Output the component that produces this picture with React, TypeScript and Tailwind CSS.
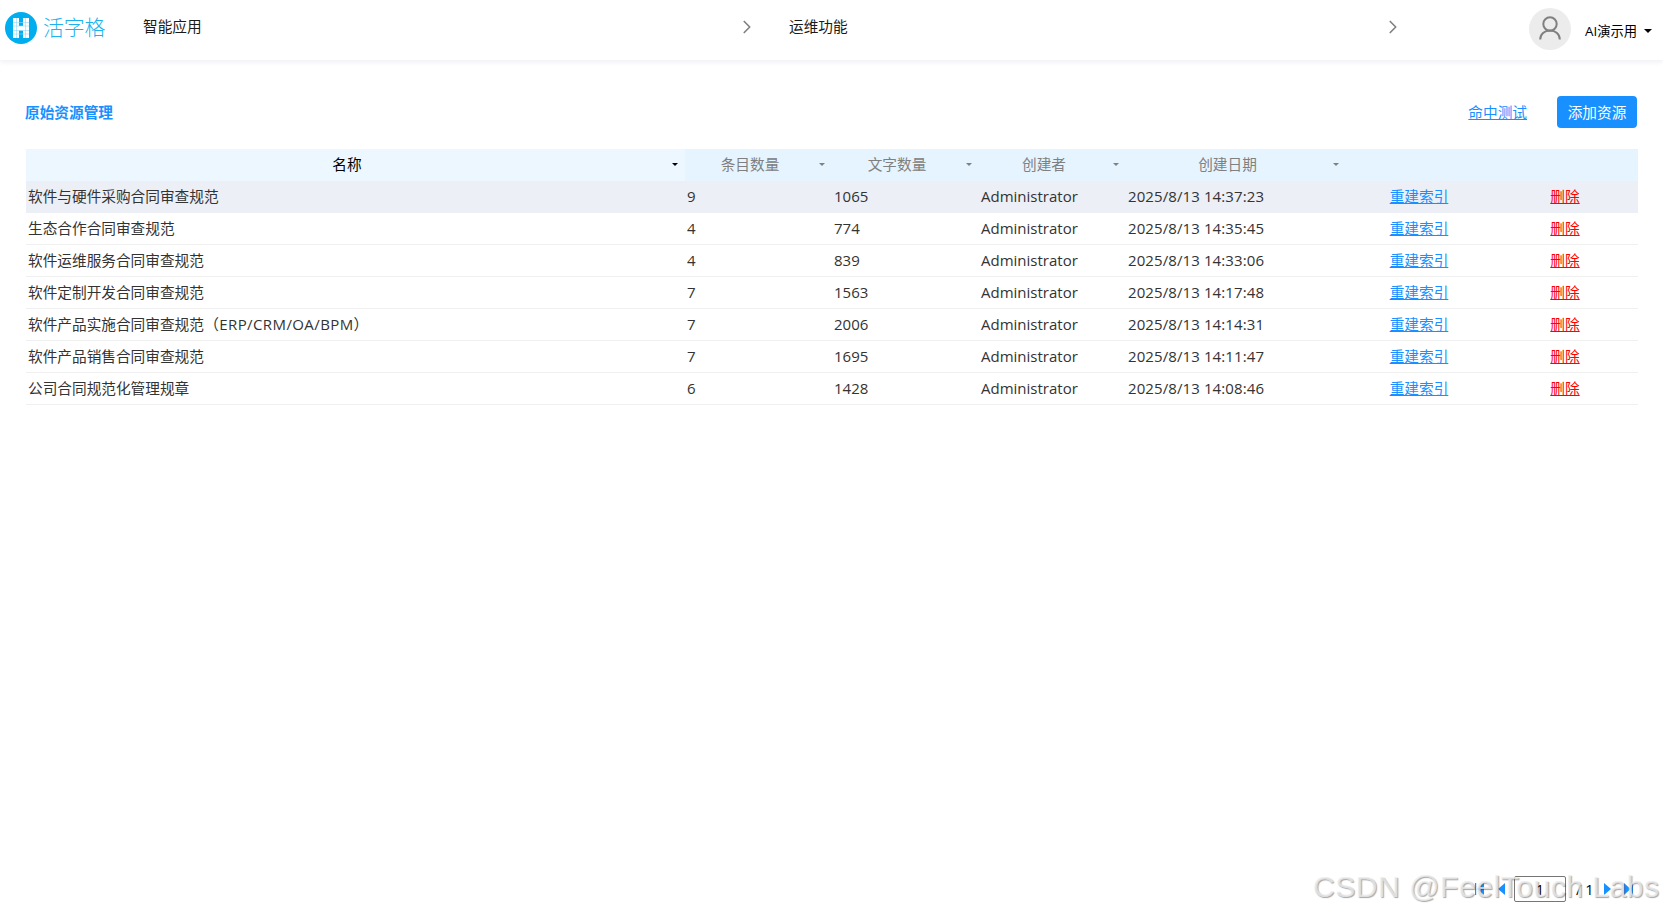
import { ChevronRight } from "lucide-react";

const columns = [
    { label: "名称", className: "bg-[#ecf7ff] text-black" },
    { label: "条目数量", className: "text-[#808080]" },
    { label: "文字数量", className: "text-[#808080]" },
    { label: "创建者", className: "text-[#808080]" },
    { label: "创建日期", className: "text-[#808080]" },
];

const rows = [
    { name: "软件与硬件采购合同审查规范", items: 9, chars: 1065, date: "2025/8/13 14:37:23" },
    { name: "生态合作合同审查规范", items: 4, chars: 774, date: "2025/8/13 14:35:45" },
    { name: "软件运维服务合同审查规范", items: 4, chars: 839, date: "2025/8/13 14:33:06" },
    { name: "软件定制开发合同审查规范", items: 7, chars: 1563, date: "2025/8/13 14:17:48" },
    { name: "软件产品实施合同审查规范", suffix: "（ERP/CRM/OA/BPM）", items: 7, chars: 2006, date: "2025/8/13 14:14:31" },
    { name: "软件产品销售合同审查规范", items: 7, chars: 1695, date: "2025/8/13 14:11:47" },
    { name: "公司合同规范化管理规章", items: 6, chars: 1428, date: "2025/8/13 14:08:46" },
];

const grid = "grid grid-cols-[659px_147px_147px_147px_220px_146px_146px] h-8";

function Logo() {
    return (
        <div className="flex items-center gap-[6px] text-[#1cb2ee]">
            <svg className="w-8 h-8" viewBox="0 0 32 32">
                <circle cx="16" cy="16" r="16" fill="#00aeef" />
                <path d="M8 6h6v20H8zM18 6h6v20h-6zM14 14h4v4.5h-4z" fill="#fff" />
                <path d="M8 10.5h16M8 14h16M8 18.5h16M8 22h16M11.5 6v20M20.5 6v20" stroke="#8fdaf8" strokeWidth="0.6" />
            </svg>
            <span className="text-[21px] leading-[30px] pb-[2px] font-light tracking-[-0.3px] whitespace-nowrap">活字格</span>
        </div>
    );
}

function Header() {
    return (
        <header className="h-[60px] flex shrink-0 pl-[5px] pt-3 text-[14.67px] text-[#1a1a1a] shadow-[0_2px_5px_rgba(0,33,82,0.07)]">
            <div className="w-[138px]">
                <Logo />
            </div>
            <div className="w-[646px] h-[30px] flex items-center justify-between pr-[31px]">
                <span className="-mt-[2px]">智能应用</span>
                <ChevronRight className="w-[22px] h-[22px] text-[#808080]" strokeWidth={1.8} />
            </div>
            <div className="w-[646px] h-[30px] flex items-center justify-between pr-[31px]">
                <span className="-mt-[2px]">运维功能</span>
                <ChevronRight className="w-[22px] h-[22px] text-[#808080]" strokeWidth={1.8} />
            </div>
            <div className="flex items-start pl-[94px]">
                <svg className="w-[42px] h-[42px] -mt-1" viewBox="0 0 42 42" fill="none">
                    <circle cx="21" cy="21" r="21" fill="#ececec" />
                    <circle cx="21" cy="16" r="6.7" stroke="#808080" strokeWidth="2" />
                    <path d="M11.2 31.5c0-5.6 4.3-9 9.8-9s9.8 3.4 9.8 9" stroke="#808080" strokeWidth="2" />
                </svg>
                <span className="ml-[14px] mt-[9px] text-[13.33px] leading-5 text-black whitespace-nowrap">AI演示用</span>
                <svg className="w-2 h-1 mt-[17px] ml-[7px]" viewBox="0 0 8 4">
                    <path d="M0 0h8L4 4z" />
                </svg>
            </div>
        </header>
    );
}

function Pager() {
    return (
        <div className="flex items-center h-[26px] text-[14.67px] text-black">
            <svg className="w-[9px] h-[12px]" viewBox="0 0 9 12" fill="#1890ff">
                <path d="M0 0h1.2v12H0zM9 0v12L2.5 6z" />
            </svg>
            <svg className="w-[7px] h-[12px] ml-[14px]" viewBox="0 0 7 12" fill="#1890ff">
                <path d="M7 0v12L0 6z" />
            </svg>
            <span className="w-[52px] h-[26px] ml-[9px] flex items-center justify-center rounded-[2px] border border-[#767676]">1</span>
            <span className="w-[18px] ml-[10px] whitespace-pre">/ 1</span>
            <svg className="w-[7px] h-[12px] ml-[10px]" viewBox="0 0 7 12" fill="#1890ff">
                <path d="M0 0v12l7-6z" />
            </svg>
            <svg className="w-[9px] h-[12px] ml-[13px]" viewBox="0 0 9 12" fill="#1890ff">
                <path d="M0 0v12l6.5-6zM7.8 0H9v12H7.8z" />
            </svg>
        </div>
    );
}

export default function App() {
    return (
        <div className="relative w-[1663px] h-[917px] overflow-hidden flex flex-col bg-white font-['Open_Sans','Noto_Sans_CJK_SC',sans-serif]">
            <Header />
            <main className="flex-1 flex flex-col pl-[25px] pr-[26px]">
                <div className="h-8 mt-9 flex items-center text-[14.67px]">
                    <h1 className="flex-1 font-bold text-[#1890ff]">原始资源管理</h1>
                    <a className="mr-[30px] text-[#1890ff] underline">命中测试</a>
                    <button className="w-20 h-8 rounded-[4px] bg-[#1890ff] text-white">添加资源</button>
                </div>

                <div className="mt-[21px] ml-px w-[1612px] text-[14.67px] leading-8 text-[#333]">
                    <div className={`${grid} bg-[#e6f4ff]`}>
                        {columns.map((col) => (
                            <div key={col.label} className={`flex items-center pr-[7px] ${col.className}`}>
                                <span className="flex-1 -mt-[2px] text-center">{col.label}</span>
                                <svg className="w-[6px] h-[3px] ml-1 -mt-px" viewBox="0 0 6 3" fill="currentColor">
                                    <path d="M0 0h6L3 3z" />
                                </svg>
                            </div>
                        ))}
                    </div>
                    {rows.map((row, i) => (
                        <div
                            key={row.name}
                            className={`${grid} border-b leading-[31px] ${i === 0 ? "bg-[#eceff5] border-[#eceff5]" : "border-[#f0f0f0]"}`}
                        >
                            <div className="pl-[2px]">
                                {row.name}
                                {row.suffix && <span className="text-[15px] tracking-[0.4px]">{row.suffix}</span>}
                            </div>
                            <div className="pl-[2px] text-[15px]">{row.items}</div>
                            <div className="pl-[2px] text-[15px]">{row.chars}</div>
                            <div className="pl-[2px] text-[15px]">Administrator</div>
                            <div className="pl-[2px] text-[15px] tracking-[0.1px]">{row.date}</div>
                            <a className="text-center text-[#1890ff] underline">重建索引</a>
                            <a className="text-center text-[#ff0000] underline">删除</a>
                        </div>
                    ))}
                </div>

                <div className="mt-auto mb-[15px] mr-1 flex justify-end">
                    <Pager />
                </div>
            </main>
            {/* Watermark lies over the pager */}
            <div className="absolute left-[1313px] top-[867px] text-[30px] leading-10 tracking-[0.55px] whitespace-nowrap text-[#ececec]/80 font-['Liberation_Sans',sans-serif] [text-shadow:1px_1px_1px_rgba(0,0,0,0.35)]">
                CSDN @FeelTouch Labs
            </div>
        </div>
    );
}
